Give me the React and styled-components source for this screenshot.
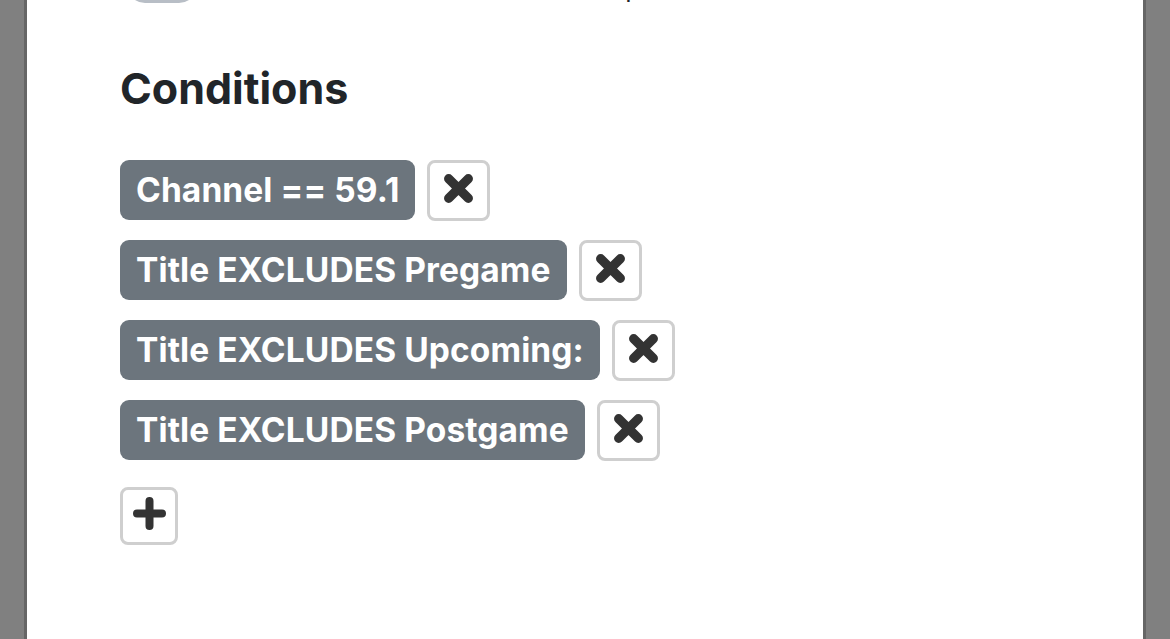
import styled, { createGlobalStyle } from "styled-components"

const GlobalStyle = createGlobalStyle`
  html, body {
    margin: 0;
    height: 100%;
    background: #808080;
    font-family: Inter, "Noto Sans", sans-serif;
    overflow: hidden;
  }
  #root {
    height: 100%;
  }
`

const Backdrop = styled.div`
  display: flex;
  height: 100%;
  padding: 0 24px;
`

const Panel = styled.div`
  flex: 1;
  background: #fff;
  border-left: 3px solid #666;
  border-right: 3px solid #666;
  padding: 0 93px;
  overflow: hidden;
`

const SwitchRow = styled.div`
  display: flex;
  align-items: flex-end;
  gap: 32px;
  margin-top: -33px;
  padding-left: 7px;
`

const Switch = styled.div`
  width: 70px;
  height: 36px;
  box-sizing: border-box;
  border: 3px solid #b8bec6;
  border-radius: 18px;
`

const SwitchLabel = styled.span`
  font-size: 26px;
  line-height: 1.21;
  color: #212529;
`

const Heading = styled.h3`
  margin: 60px 0 45px;
  font-size: 43px;
  font-weight: 700;
  color: #212529;
  line-height: 1.2;
`

const List = styled.div`
  display: flex;
  flex-direction: column;
  gap: 19px;
`

const Row = styled.div`
  display: flex;
  align-items: flex-start;
  gap: 12px;
`

const Badge = styled.span`
  display: inline-flex;
  align-items: center;
  height: 60px;
  padding: 0 16px;
  box-sizing: border-box;
  background: #6c757d;
  color: #fff;
  border-radius: 9px;
  font-size: 33.5px;
  font-weight: 700;
  letter-spacing: 0.1px;
  white-space: nowrap;
`

const IconButton = styled.button`
  display: inline-flex;
  align-items: center;
  justify-content: center;
  width: ${p => p.$w}px;
  height: ${p => p.$h}px;
  padding: 0;
  box-sizing: border-box;
  background: #fff;
  border: 3px solid #cfcfcf;
  border-radius: 8px;
  color: #333;
`

const AddButton = styled(IconButton)`
  margin-top: 26px;
`

const CrossIcon = () => (
  <svg width="31" height="31" viewBox="0 0 30 30" style={{ marginTop: -4 }}>
    <path
      d="M5.5 5.5 L24.5 24.5 M24.5 5.5 L5.5 24.5"
      stroke="currentColor"
      strokeWidth="9"
      strokeLinecap="round"
      fill="none"
    />
  </svg>
)

const PlusIcon = () => (
  <svg width="33" height="33" viewBox="0 0 33 33" style={{ marginTop: -4 }}>
    <path
      d="M16.5 4 V29 M4 16.5 H29"
      stroke="currentColor"
      strokeWidth="8"
      strokeLinecap="round"
      fill="none"
    />
  </svg>
)

const conditions = [
  "Channel == 59.1",
  "Title EXCLUDES Pregame",
  "Title EXCLUDES Upcoming:",
  "Title EXCLUDES Postgame",
]

const App = () => {
  return (
    <>
      <GlobalStyle />
      <Backdrop>
        <Panel>
          <SwitchRow>
            <Switch />
            <SwitchLabel>Enable this rule to hide it and skip</SwitchLabel>
          </SwitchRow>
          <Heading>Conditions</Heading>
          <List>
            {conditions.map(c => (
              <Row key={c}>
                <Badge>{c}</Badge>
                <IconButton $w={63} $h={61}>
                  <CrossIcon />
                </IconButton>
              </Row>
            ))}
          </List>
          <AddButton $w={58} $h={58}>
            <PlusIcon />
          </AddButton>
        </Panel>
      </Backdrop>
    </>
  )
}

export default App
